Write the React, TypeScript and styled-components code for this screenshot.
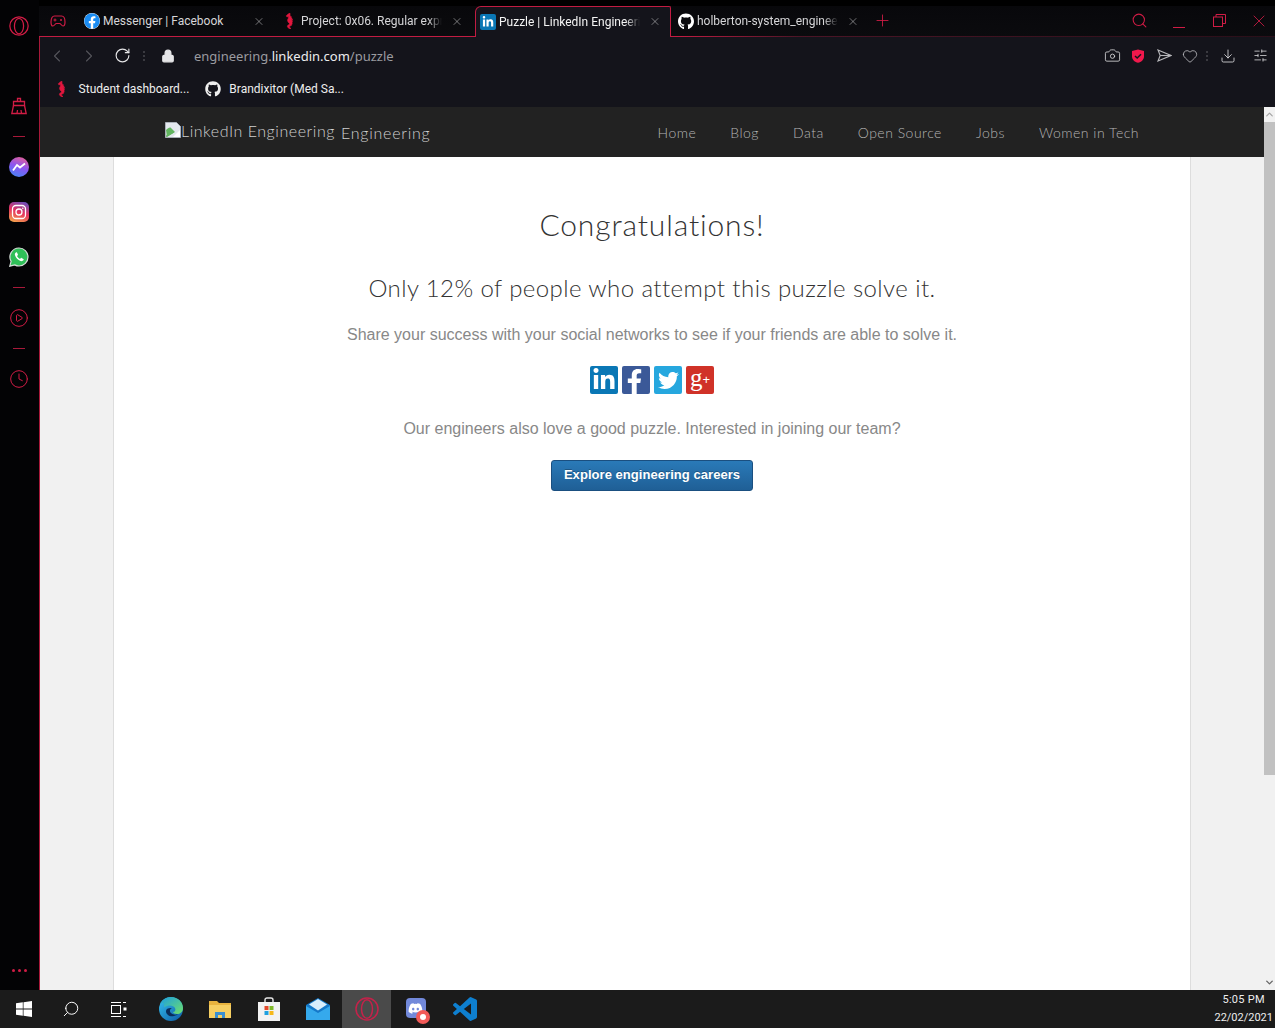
import React from "react";
import styled, { createGlobalStyle } from "styled-components";
import {
  Camera,
  ChevronDown,
  ChevronLeft,
  ChevronRight,
  ChevronUp,
  CirclePlay,
  Clock,
  Download,
  Heart,
  Lock,
  Plus,
  RotateCw,
  Search,
  SlidersHorizontal,
  X,
} from "lucide-react";
import { FaDiscord, FaFacebook, FaFacebookF, FaGithub, FaLinkedinIn, FaTwitter } from "react-icons/fa";

const RED = "#d01c45";
const UI_FONT = 'Roboto, "Noto Sans", sans-serif';
const HEAD_FONT = 'Lato, "Noto Sans", sans-serif';

const Global = createGlobalStyle`
  html, body { margin: 0; padding: 0; background: #000; }
  body { width: 1275px; height: 1028px; overflow: hidden; font-family: ${UI_FONT}; }
  * { box-sizing: border-box; }
`;

const Screen = styled.div`
  width: 1275px;
  height: 1028px;
  display: flex;
  flex-direction: column;
`;
const Desktop = styled.div`
  height: 990px;
  display: flex;
`;

/* ---- sidebar ---- */
const Sidebar = styled.aside`
  width: 39px;
  flex: none;
  background: #030305;
  display: flex;
  flex-direction: column;
  align-items: center;
  gap: 18px;
  padding: 14px 1px 8px 0;
  color: ${RED};
`;
const SideIcon = styled.div<{ $after?: number }>`
  width: 20px;
  height: 24px;
  display: flex;
  align-items: center;
  justify-content: center;
  margin-bottom: ${(p) => p.$after ?? 0}px;
`;
const SideDash = styled.div`
  width: 12px;
  height: 1px;
  background: #a8193a;
`;
const SideGroup = styled.div`
  display: flex;
  flex-direction: column;
  gap: 21px;
`;
const Dots = styled.div`
  margin-top: auto;
  display: flex;
  gap: 3px;
  padding-bottom: 10px;
`;
const Dot = styled.i`
  width: 3px;
  height: 3px;
  border-radius: 50%;
  background: ${RED};
`;
const AppBadge = styled.div<{ $bg: string; $round?: boolean }>`
  width: 20px;
  height: 20px;
  border-radius: ${(p) => (p.$round ? "50%" : "5px")};
  background: ${(p) => p.$bg};
  color: #fff;
  display: flex;
  align-items: center;
  justify-content: center;
`;

/* ---- browser column ---- */
const Browser = styled.div`
  flex: 1;
  min-width: 0;
  display: flex;
  flex-direction: column;
`;
const TabStrip = styled.div`
  height: 37px;
  flex: none;
  padding-top: 6px;
  display: flex;
  align-items: stretch;
  background: linear-gradient(#000 0 6px, #08080b 6px, #0b0b0e);
  position: relative;
`;
const StripLine = styled.div`
  position: absolute;
  left: 0;
  right: 0;
  bottom: 0;
  height: 1px;
  background: linear-gradient(90deg, #c21c42 0, #c21c42 640px, #4c1526 760px, #2a0f19 100%);
`;
const GameSlot = styled.div`
  width: 41px;
  flex: none;
  display: flex;
  align-items: center;
  justify-content: center;
  padding: 0 4px 1px 0;
  color: ${RED};
`;
const Tab = styled.div<{ $active?: boolean }>`
  width: 198px;
  flex: none;
  display: flex;
  align-items: center;
  gap: 3px;
  padding: 0 13px 1px 4px;
  font-size: 12px;
  color: ${(p) => (p.$active ? "#f4f4f4" : "#d6d6d8")};
  position: relative;
  z-index: 1;
  ${(p) =>
    p.$active
      ? `width:196px;margin:0 3px 0 -1px;background:#14141b;border:1px solid #c21c42;border-bottom:none;border-radius:6px 2px 0 0;padding-right:9px;`
      : ""}
`;
const Favicon = styled.div`
  width: 16px;
  height: 16px;
  flex: none;
  display: flex;
  align-items: center;
  justify-content: center;
  color: #fff;
`;
const LinkedInFav = styled.div`
  width: 16px;
  height: 16px;
  border-radius: 2px;
  background: #0a77b5;
  color: #fff;
  display: flex;
  align-items: center;
  justify-content: center;
`;
const TabTitle = styled.span<{ $fade?: boolean }>`
  flex: 1;
  min-width: 0;
  white-space: nowrap;
  overflow: hidden;
  ${(p) =>
    p.$fade
      ? `-webkit-mask-image:linear-gradient(90deg,#000 90%,transparent 100%);mask-image:linear-gradient(90deg,#000 90%,transparent 100%);`
      : ""}
`;
const TabClose = styled.div`
  flex: none;
  width: 12px;
  height: 12px;
  margin-left: 6px;
  color: #dcdcde;
  display: flex;
  align-items: center;
  justify-content: center;
`;
const NewTab = styled.div`
  width: 22px;
  margin-left: -1px;
  display: flex;
  align-items: center;
  justify-content: center;
  color: ${RED};
  padding-bottom: 2px;
`;
const WindowButtons = styled.div`
  margin-left: auto;
  display: flex;
  align-items: center;
  color: ${RED};
  padding-bottom: 2px;
`;
const WindowButton = styled.div`
  width: 40px;
  display: flex;
  align-items: center;
  justify-content: center;
  &:last-child {
    width: 32px;
    margin-left: 4px;
  }
`;

const Chrome = styled.div`
  flex: none;
  height: 70px;
  background: #14141b;
  border-left: 1px solid #a8193a;
  display: flex;
  flex-direction: column;
`;
const AddressRow = styled.div`
  height: 37px;
  display: flex;
  align-items: center;
  color: #e6e6e8;
`;
const NavSlot = styled.div<{ $w: number; $tone?: string }>`
  width: ${(p) => p.$w}px;
  flex: none;
  display: flex;
  align-items: center;
  justify-content: center;
  color: ${(p) => p.$tone ?? "#e6e6e8"};
`;
const VDots = styled.div<{ $left?: number }>`
  width: 2px;
  height: 10px;
  flex: none;
  margin-left: ${(p) => p.$left ?? 0}px;
  background: repeating-linear-gradient(#3a3a40 0 2px, transparent 2px 4px);
`;
const Url = styled.div`
  flex: 1;
  font: 13px "Noto Sans", sans-serif;
  color: #9b9ba0;
  margin-left: 3px;
  b {
    font-weight: 400;
    color: #ececee;
  }
`;
const BookmarkRow = styled.div`
  height: 33px;
  display: flex;
  align-items: center;
  padding-left: 17px;
  padding-bottom: 3px;
  font-size: 12px;
  color: #eeeeee;
`;
const Bookmark = styled.div<{ $gap: number }>`
  display: flex;
  align-items: center;
  gap: ${(p) => p.$gap}px;
  margin-right: 16px;
`;

/* ---- page ---- */
const Viewport = styled.div`
  flex: 1;
  min-height: 0;
  display: flex;
  border-left: 1px solid #a8193a;
`;
const Page = styled.main`
  flex: 1;
  min-width: 0;
  background: #f1f1f1;
  display: flex;
  flex-direction: column;
`;
const SiteHeader = styled.header`
  height: 50px;
  flex: none;
  background: #222;
  display: flex;
  justify-content: center;
`;
const HeaderInner = styled.div`
  width: 974px;
  display: flex;
  align-items: center;
  justify-content: space-between;
  font-family: ${HEAD_FONT};
  font-weight: 300;
  color: #b4b4b4;
`;
const Brand = styled.div`
  display: flex;
  align-items: center;
  gap: 6px;
  color: #d0d0d0;
  font-size: 16px;
  letter-spacing: 0.55px;
`;
const BrokenImage = styled.span`
  display: inline-flex;
  align-items: center;
  margin-top: -4px;
  svg {
    flex: none;
  }
`;
const BrandWord = styled.span`
  padding-top: 1px;
  letter-spacing: 0.75px;
`;
const Nav = styled.nav`
  display: flex;
  gap: 34px;
  font-size: 14px;
  letter-spacing: 0.5px;
`;
const Content = styled.section`
  width: 1078px;
  flex: 1;
  align-self: center;
  background: #fff;
  border-left: 1px solid #ddd;
  border-right: 1px solid #ddd;
  display: flex;
  flex-direction: column;
  align-items: center;
  padding-top: 48px;
`;
const Title = styled.h1`
  margin: 0;
  font: 300 30px/38px ${HEAD_FONT};
  letter-spacing: 0.85px;
  color: #333;
`;
const Subtitle = styled.h2`
  margin: 30px 0 0;
  font: 300 24px/30px ${HEAD_FONT};
  letter-spacing: 0.42px;
  color: #333;
`;
const Lead = styled.p<{ $top: number }>`
  margin: ${(p) => p.$top}px 0 0;
  font: 16px/20px "Liberation Sans", Arial, sans-serif;
  color: #888;
`;
const Shares = styled.div`
  display: flex;
  gap: 4px;
  margin-top: 21px;
`;
const Share = styled.a<{ $bg: string; $end?: boolean }>`
  width: 28px;
  height: 28px;
  border-radius: 2px;
  overflow: hidden;
  background: ${(p) => p.$bg};
  color: #fff;
  display: flex;
  align-items: ${(p) => (p.$end ? "flex-end" : "center")};
  justify-content: ${(p) => (p.$end ? "flex-end" : "center")};
  padding-right: ${(p) => (p.$end ? "3px" : "0")};
`;
const GooglePlus = styled.span`
  font: 25px/24px "Liberation Serif", serif;
  color: #fff;
  padding-bottom: 5px;
  sup {
    font: 13px/1 "Liberation Sans", sans-serif;
    vertical-align: 2px;
  }
`;
const Careers = styled.button`
  margin-top: 21px;
  width: 202px;
  height: 31px;
  border: 1px solid #1a4f80;
  border-radius: 3px;
  background: linear-gradient(#2a7ab8, #1f5f96);
  color: #fff;
  font: bold 13px "Liberation Sans", Arial, sans-serif;
  letter-spacing: 0.05px;
  text-shadow: 0 -1px 0 rgba(0, 0, 0, 0.25);
  padding: 0 0 2px;
`;
const Scrollbar = styled.div`
  width: 11px;
  flex: none;
  background: #f1f1f1;
  display: flex;
  flex-direction: column;
  align-items: center;
  color: #a3a3a3;
`;
const ScrollArrow = styled.div`
  height: 15px;
  flex: none;
  display: flex;
  align-items: center;
  justify-content: center;
`;
const ScrollTrack = styled.div`
  flex: 1;
  width: 100%;
`;
const ScrollThumb = styled.div`
  height: 653px;
  width: 100%;
  background: #c1c1c1;
`;

/* ---- taskbar ---- */
const Taskbar = styled.footer`
  height: 38px;
  flex: none;
  background: #1b1b1b;
  display: flex;
  align-items: stretch;
  color: #fff;
`;
const TaskSlot = styled.div<{ $w?: number; $active?: boolean; $gap?: number }>`
  width: ${(p) => p.$w ?? 49}px;
  flex: none;
  margin-left: ${(p) => p.$gap ?? 0}px;
  display: flex;
  align-items: center;
  justify-content: center;
  position: relative;
  background: ${(p) => (p.$active ? "#4a4a4a" : "transparent")};
`;
const RecordBadge = styled.span`
  position: absolute;
  left: 25px;
  top: 20px;
  width: 14px;
  height: 14px;
  border-radius: 50%;
  background: #f25a58;
  display: flex;
  align-items: center;
  justify-content: center;
  &::after {
    content: "";
    width: 6px;
    height: 6px;
    border-radius: 50%;
    background: #fff;
  }
`;
const DiscordTile = styled.div`
  width: 20px;
  height: 20px;
  border-radius: 4px;
  margin-top: -2px;
  background: #7289da;
  display: flex;
  align-items: center;
  justify-content: center;
`;
const Tray = styled.div`
  margin-left: auto;
  padding: 1px 2px 0 0;
  font-size: 11px;
  line-height: 18px;
  text-align: right;
  color: #eee;
`;
const ClockTime = styled.div`
  padding-right: 8px;
  letter-spacing: 0.3px;
`;

const Seahorse = ({ h = 16 }: { h?: number }) => (
  <svg width={h * 0.6} height={h} viewBox="0 0 10 18" fill="#e3173e" stroke="#e3173e" strokeWidth="0.8">
    <path d="M5 0 3 1.500 1.200 3l.5 1.300L4 4 3.400 6l-.9 2 .6 2.200 1.600 1.500-.4 1.600-1.400.4-.6 1.400L3.500 17l2.200 1 .2-1-1.800-1.300.9-1 1.600-.5 1-2.300-.2-2 .9-1-1.100-.5.9-1.200-1.200-.3.6-1.300-1.200-.1.3-1.500-1.200.1z" />
  </svg>
);

const GameIcon = () => (
  <svg width="16" height="12" viewBox="0 0 16 12" fill="none" stroke="currentColor" strokeWidth="1.200">
    <path d="M4.500 1h7C13.500 1 15 3 15 7c0 3-.8 4-2 4-1.500 0-2-2.500-3.500-2.500h-3C5 8.500 4.500 11 3 11c-1.200 0-2-1-2-4 0-4 1.500-6 3.500-6z" />
    <path d="M3.500 5h3M5 3.500v3" strokeWidth="1" />
    <circle cx="11" cy="5" r="1" fill="currentColor" stroke="none" />
  </svg>
);

const OperaLogo = ({ size, color }: { size: number; color: string }) => (
  <svg width={size} height={size} viewBox="0 0 24 24" fill="none" stroke={color} strokeWidth="1.500">
    <circle cx="12" cy="12" r="11" />
    <ellipse cx="12" cy="12" rx="5.500" ry="9.300" />
  </svg>
);

const BrushIcon = () => (
  <svg width="18" height="18" viewBox="0 0 18 18" fill="none" stroke="currentColor" strokeWidth="1.300">
    <path d="M7.500 4.500V1.500h3v3" />
    <path d="M3.500 4.500h11v4h-11z" />
    <path d="M3.500 8.500 1.800 16.500h14.400l-1.700-8" />
    <path d="M7 16.500 7.500 13M11.500 16.500 11 13" />
  </svg>
);

const InstagramBadge = () => (
  <AppBadge $bg="linear-gradient(20deg,#f6b24a,#e5325f 50%,#5a53c9)">
    <svg width="16" height="16" viewBox="0 0 16 16" fill="none" stroke="#fff" strokeWidth="1.300">
      <rect x="1.500" y="1.500" width="13" height="13" rx="3.500" />
      <circle cx="8" cy="8" r="3" />
      <circle cx="11.800" cy="4.200" r="0.800" fill="#fff" stroke="none" />
    </svg>
  </AppBadge>
);

const WhatsAppIcon = () => (
  <svg width="20" height="20" viewBox="0 0 20 20">
    <path d="M10 1a9 9 0 0 1 0 18 9 9 0 0 1-4.300-1.100L.8 19.200l1.300-4.800A9 9 0 0 1 10 1z" fill="#2fbf58" stroke="#d5dcd7" strokeWidth="1.200" />
    <path d="M7 5.500c-.8.500-1.400 1.400-1 2.800.7 2.500 3 4.900 5.500 5.700 1.400.4 2.500-.2 3-1 .3-.5.200-.9-.1-1.100l-1.900-1c-.3-.1-.5 0-.7.200l-.7.900c-1.300-.5-2.500-1.700-3.100-3l.8-.8c.2-.2.200-.4.100-.7L8 5.600c-.2-.3-.6-.3-1-.1z" fill="#fff" />
  </svg>
);

const BrokenPic = () => (
  <svg width="16" height="16" viewBox="0 0 16 16">
    <path d="M.5.5h11l4 4v11H.5z" fill="#e4e8ee" stroke="#aab0b8" />
    <path d="M1 14 6 8l3 2.500L1 15z" fill="#4fa34c" />
    <path d="M1 8c2-2 4-3 5-2l4 4-8 5z" fill="#63b560" />
    <path d="M8 15 15 8v7z" fill="#fff" />
  </svg>
);

const SendIcon = () => (
  <svg width="15" height="13" viewBox="0 0 15 13" fill="none" stroke="currentColor" strokeWidth="1.100">
    <path d="M1 1l13 5.500L1 12l2.200-5.500z" />
    <path d="M3.200 6.500H14" />
  </svg>
);

const ShieldIcon = () => (
  <svg width="14" height="14" viewBox="0 0 14 14">
    <path d="M7 .5 13 2v5.500C13 11 10 13 7 13.800 4 13 1 11 1 7.500V2z" fill="#f0184c" />
    <path d="m4 7 2.200 2L10 5.300" fill="none" stroke="#14141b" strokeWidth="1.500" />
  </svg>
);

const RestoreIcon = () => (
  <svg width="13" height="13" viewBox="0 0 13 13" fill="none" stroke="currentColor" strokeWidth="1">
    <rect x="0.500" y="3" width="9" height="9.500" />
    <path d="M3 3V.5h9.500v9H9.500" />
  </svg>
);

const MessengerBadge = () => (
  <AppBadge $round $bg="linear-gradient(20deg,#3b8cf5,#8b55f2 50%,#f1608a)">
    <svg width="14" height="10" viewBox="0 0 14 10" fill="none" stroke="#fff" strokeWidth="1.800">
      <path d="M1 8.500 5 3l3 2.500L13 1.500" />
    </svg>
  </AppBadge>
);

const WindowsLogo = () => (
  <svg width="16" height="16" viewBox="0 0 16 16" fill="#fff">
    <path d="M0 2.300 6.800 1.300V7.600H0zM7.500 1.200 16 0V7.600H7.500zM0 8.400h6.800v6.300L0 13.700zM7.500 8.400H16V16L7.500 14.800z" />
  </svg>
);

const TaskViewIcon = () => (
  <svg width="16" height="15" viewBox="0 0 16 15" fill="none" stroke="#fff" strokeWidth="1">
    <path d="M0 .5h10M0 14.500h10" />
    <rect x="0.500" y="3.500" width="9" height="8" />
    <path d="M12 .5h3M12 14.500h3" />
    <rect x="12.500" y="5.500" width="3" height="3" fill="#fff" stroke="none" />
  </svg>
);

const EdgeIcon = () => (
  <svg width="24" height="24" viewBox="0 0 24 24">
    <defs>
      <linearGradient id="edgeA" x1="0" y1="0" x2="1" y2="1">
        <stop offset="0" stopColor="#35c1f1" />
        <stop offset="1" stopColor="#0c59a4" />
      </linearGradient>
      <linearGradient id="edgeB" x1="0" y1="0" x2="1" y2="1">
        <stop offset="0" stopColor="#1b9de2" />
        <stop offset="1" stopColor="#6fe06a" />
      </linearGradient>
    </defs>
    <circle cx="12" cy="12" r="12" fill="url(#edgeA)" />
    <path d="M12 0c7 0 12 5 12 11 0 4-3 6-6 6-2 0-4-1-4-2 2 0 3-2 2-4-1.500-3-7-3.500-11-.5C6 5 2 5 1 8c1-5 6-8 11-8z" fill="url(#edgeB)" />
    <path d="M7 14c0 4 4 6 8 5 2-.5 3-1 4-2-2 1-5 1-7-1-1.500-1.500-1.500-4 1-5-3-.5-6 .5-6 3z" fill="#0a2c5a" />
  </svg>
);

const FolderIcon = () => (
  <svg width="22" height="18" viewBox="0 0 22 18">
    <path d="M0 1h8l2 2h12v14H0z" fill="#e8b33e" />
    <path d="M0 5h22v13H0z" fill="#f6cf62" />
    <path d="M6 12h10v6h-3v-3H9v3H6z" fill="#3a8fd0" />
  </svg>
);

const StoreIcon = () => (
  <svg width="24" height="24" viewBox="0 0 24 24">
    <path d="M8 5V3a2 2 0 0 1 2-2h4a2 2 0 0 1 2 2v2" fill="none" stroke="#e6e6e6" strokeWidth="1.400" />
    <path d="M1 5h22v19H1z" fill="#f2f2f2" />
    <path d="M7.500 9h4v4h-4z" fill="#e2492a" />
    <path d="M12.500 9h4v4h-4z" fill="#7eb927" />
    <path d="M7.500 14h4v4h-4z" fill="#1fa0e0" />
    <path d="M12.500 14h4v4h-4z" fill="#f6b818" />
  </svg>
);

const MailIcon = () => (
  <svg width="24" height="22" viewBox="0 0 24 22">
    <path d="M12 0 24 7v15H0V7z" fill="#1479c9" />
    <path d="M0 8l12 7 12-7v14H0z" fill="#35a9ec" />
    <path d="M3 6.500 12 1l9 5.500-9 6z" fill="#d8eefc" />
  </svg>
);

const VSCodeIcon = () => (
  <svg width="24" height="24" viewBox="0 0 24 24" fill="#0e7fcf">
    <path d="M23.150 2.587 18.210.21a1.494 1.494 0 0 0-1.705.29l-9.460 8.630-4.120-3.128a.999.999 0 0 0-1.276.057L.327 7.261A1 1 0 0 0 .326 8.740L3.899 12 .326 15.260a1 1 0 0 0 .001 1.479L1.650 17.940a.999.999 0 0 0 1.276.057l4.120-3.128 9.460 8.630a1.492 1.492 0 0 0 1.704.290l4.942-2.377A1.500 1.500 0 0 0 24 20.060V3.939a1.500 1.500 0 0 0-.85-1.352zm-5.146 14.861L10.826 12l7.178-5.448v10.896z" />
  </svg>
);

const tabs = [
  { key: "fb", title: "Messenger | Facebook", icon: <FaFacebook size={16} color="#1a8cf2" style={{ background: "#fff", borderRadius: "50%" }} /> },
  { key: "pr", title: "Project: 0x06. Regular expressions", icon: <Seahorse />, fade: true },
  { key: "li", title: "Puzzle | LinkedIn Engineering", active: true, fade: true, icon: <LinkedInFav><FaLinkedinIn size={12} /></LinkedInFav> },
  { key: "gh", title: "holberton-system_engineering", icon: <FaGithub size={17} />, fade: true },
];

const navItems = ["Home", "Blog", "Data", "Open Source", "Jobs", "Women in Tech"];

export default function App() {
  return (
    <Screen>
      <Global />
      <Desktop>
        <Sidebar>
          <SideIcon $after={38}>
            <OperaLogo size={20} color={RED} />
          </SideIcon>
          <SideIcon>
            <BrushIcon />
          </SideIcon>
          <SideDash />
          <SideGroup>
            <SideIcon>
              <MessengerBadge />
            </SideIcon>
            <SideIcon>
              <InstagramBadge />
            </SideIcon>
            <SideIcon>
              <WhatsAppIcon />
            </SideIcon>
          </SideGroup>
          <SideDash />
          <SideIcon>
            <CirclePlay size={20} strokeWidth={1.2} />
          </SideIcon>
          <SideDash />
          <SideIcon>
            <Clock size={20} strokeWidth={1.2} />
          </SideIcon>
          <Dots>
            <Dot />
            <Dot />
            <Dot />
          </Dots>
        </Sidebar>

        <Browser>
          <TabStrip>
            <StripLine />
            <GameSlot>
              <GameIcon />
            </GameSlot>
            {tabs.map((t) => (
              <Tab key={t.key} $active={t.active}>
                <Favicon>{t.icon}</Favicon>
                <TabTitle $fade={t.fade}>{t.title}</TabTitle>
                <TabClose>
                  <X size={19} strokeWidth={1} />
                </TabClose>
              </Tab>
            ))}
            <NewTab>
              <Plus size={19} strokeWidth={1.1} />
            </NewTab>
            <WindowButtons>
              <WindowButton>
                <Search size={17} strokeWidth={1.5} />
              </WindowButton>
              <WindowButton>
                <svg width="12" height="14" viewBox="0 0 12 14">
                  <path d="M0 13.500h12" stroke="currentColor" />
                </svg>
              </WindowButton>
              <WindowButton>
                <RestoreIcon />
              </WindowButton>
              <WindowButton>
                <X size={20} strokeWidth={1} />
              </WindowButton>
            </WindowButtons>
          </TabStrip>

          <Chrome>
            <AddressRow>
              <NavSlot $w={34} $tone="#55555b">
                <ChevronLeft size={20} strokeWidth={1.3} />
              </NavSlot>
              <NavSlot $w={30} $tone="#55555b">
                <ChevronRight size={20} strokeWidth={1.3} />
              </NavSlot>
              <NavSlot $w={36}>
                <RotateCw size={17} strokeWidth={1.6} />
              </NavSlot>
              <VDots $left={3} />
              <NavSlot $w={46}>
                <Lock size={14} strokeWidth={2} fill="#e6e6e8" />
              </NavSlot>
              <Url>
                engineering.<b>linkedin.com</b>/puzzle
              </Url>
              <NavSlot $w={26}>
                <Camera size={17} strokeWidth={1.1} />
              </NavSlot>
              <NavSlot $w={26}>
                <ShieldIcon />
              </NavSlot>
              <NavSlot $w={26} $tone="#b8b8bc">
                <SendIcon />
              </NavSlot>
              <NavSlot $w={26} $tone="#d0d0d4">
                <Heart size={16} strokeWidth={1.1} />
              </NavSlot>
              <NavSlot $w={8}>
                <VDots />
              </NavSlot>
              <NavSlot $w={34}>
                <Download size={16} strokeWidth={1.2} />
              </NavSlot>
              <NavSlot $w={30}>
                <SlidersHorizontal size={15} strokeWidth={1.2} />
              </NavSlot>
            </AddressRow>
            <BookmarkRow>
              <Bookmark $gap={12}>
                <Seahorse />
                Student dashboard...
              </Bookmark>
              <Bookmark $gap={8}>
                <FaGithub size={16} />
                Brandixitor (Med Sa...
              </Bookmark>
            </BookmarkRow>
          </Chrome>

          <Viewport>
            <Page>
              <SiteHeader>
                <HeaderInner>
                  <Brand>
                    <BrokenImage>
                      <BrokenPic />
                      LinkedIn Engineering
                    </BrokenImage>
                    <BrandWord>Engineering</BrandWord>
                  </Brand>
                  <Nav>
                    {navItems.map((n) => (
                      <span key={n}>{n}</span>
                    ))}
                  </Nav>
                </HeaderInner>
              </SiteHeader>
              <Content>
                <Title>Congratulations!</Title>
                <Subtitle>Only 12% of people who attempt this puzzle solve it.</Subtitle>
                <Lead $top={22}>Share your success with your social networks to see if your friends are able to solve it.</Lead>
                <Shares>
                  <Share $bg="#0a77b5">
                    <FaLinkedinIn size={24} />
                  </Share>
                  <Share $bg="#3b5998" $end>
                    <FaFacebookF size={25} />
                  </Share>
                  <Share $bg="#26a7de">
                    <FaTwitter size={21} />
                  </Share>
                  <Share $bg="#d03228">
                    <GooglePlus>
                      g<sup>+</sup>
                    </GooglePlus>
                  </Share>
                </Shares>
                <Lead $top={25}>Our engineers also love a good puzzle. Interested in joining our team?</Lead>
                <Careers>Explore engineering careers</Careers>
              </Content>
            </Page>
            <Scrollbar>
              <ScrollArrow>
                <ChevronUp size={11} strokeWidth={2.5} />
              </ScrollArrow>
              <ScrollThumb />
              <ScrollTrack />
              <ScrollArrow>
                <ChevronDown size={11} strokeWidth={3} color="#666" />
              </ScrollArrow>
            </Scrollbar>
          </Viewport>
        </Browser>
      </Desktop>

      <Taskbar>
        <TaskSlot $w={47}>
          <WindowsLogo />
        </TaskSlot>
        <TaskSlot $w={48}>
          <Search size={18} strokeWidth={1.3} style={{ transform: "scaleX(-1)" }} />
        </TaskSlot>
        <TaskSlot $w={48}>
          <TaskViewIcon />
        </TaskSlot>
        <TaskSlot $gap={3}>
          <EdgeIcon />
        </TaskSlot>
        <TaskSlot>
          <FolderIcon />
        </TaskSlot>
        <TaskSlot>
          <StoreIcon />
        </TaskSlot>
        <TaskSlot>
          <MailIcon />
        </TaskSlot>
        <TaskSlot $active>
          <OperaLogo size={24} color="#c4224a" />
        </TaskSlot>
        <TaskSlot>
          <DiscordTile>
            <FaDiscord size={15} color="#fff" />
          </DiscordTile>
          <RecordBadge />
        </TaskSlot>
        <TaskSlot>
          <VSCodeIcon />
        </TaskSlot>
        <Tray>
          <ClockTime>5:05 PM</ClockTime>
          22/02/2021
        </Tray>
      </Taskbar>
    </Screen>
  );
}
